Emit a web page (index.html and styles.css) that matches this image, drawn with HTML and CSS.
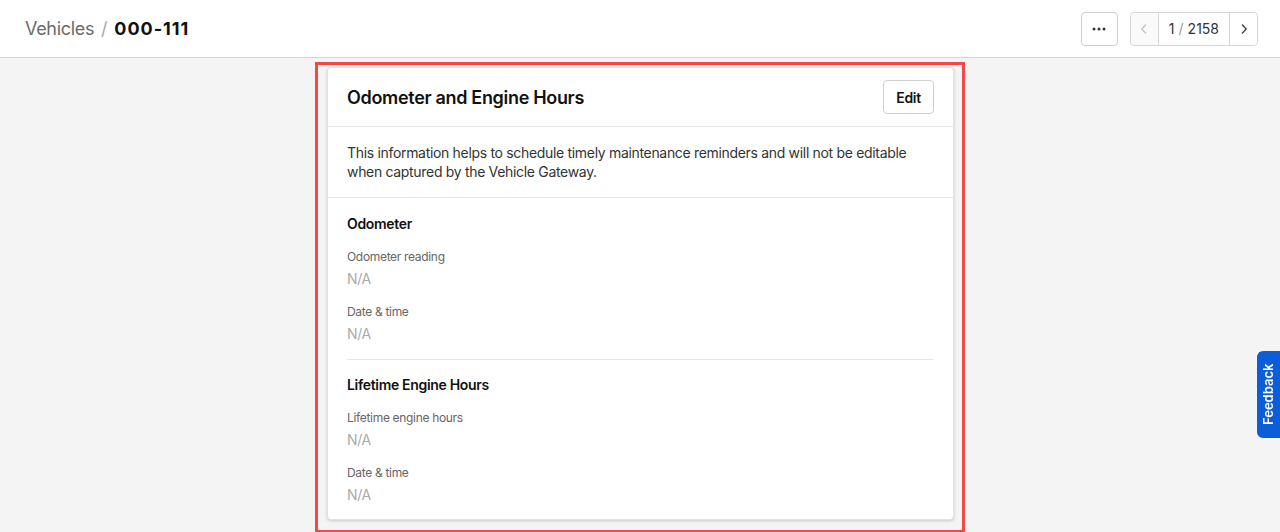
FILE: index.html
```html
<!DOCTYPE html>
<html lang="en">
<head>
    <meta charset="UTF-8">
    <meta name="viewport" content="width=device-width, initial-scale=1.0">
    <title>000-111 - Vehicles</title>
    <link rel="stylesheet" href="styles.css">
</head>
<body>
    <header class="topbar">
        <div class="crumbs">
            <span class="crumb">Vehicles</span>
            <span class="sep">/</span>
            <span class="current">000-111</span>
        </div>
        <div class="actions">
            <button class="more-btn" aria-label="More">
                <svg width="14" height="4" viewBox="0 0 14 4"><circle cx="2" cy="2" r="1.5"/><circle cx="7" cy="2" r="1.5"/><circle cx="12" cy="2" r="1.5"/></svg>
            </button>
            <div class="pager">
                <button class="pg-btn disabled" aria-label="Previous">
                    <svg width="8" height="12" viewBox="0 0 8 12"><path d="M6 1.5 1.8 6 6 10.5" fill="none" stroke="currentColor" stroke-width="1.4"/></svg>
                </button>
                <span class="pg-count">1 <span class="slash">/</span> 2158</span>
                <button class="pg-btn" aria-label="Next">
                    <svg width="8" height="12" viewBox="0 0 8 12"><path d="M2 1.5 6.2 6 2 10.5" fill="none" stroke="currentColor" stroke-width="1.4"/></svg>
                </button>
            </div>
        </div>
    </header>

    <main class="content">
        <div class="highlight">
            <section class="card">
                <div class="card-head">
                    <h2>Odometer and Engine Hours</h2>
                    <button class="edit-btn">Edit</button>
                </div>
                <p class="card-desc">This information helps to schedule timely maintenance reminders and will not be editable when captured by the Vehicle Gateway.</p>
                <div class="group">
                    <h3>Odometer</h3>
                    <div class="field">
                        <div class="label">Odometer reading</div>
                        <div class="value">N/A</div>
                    </div>
                    <div class="field">
                        <div class="label">Date &amp; time</div>
                        <div class="value">N/A</div>
                    </div>
                </div>
                <div class="group">
                    <h3>Lifetime Engine Hours</h3>
                    <div class="field">
                        <div class="label">Lifetime engine hours</div>
                        <div class="value">N/A</div>
                    </div>
                    <div class="field">
                        <div class="label">Date &amp; time</div>
                        <div class="value">N/A</div>
                    </div>
                </div>
            </section>
        </div>
    </main>

    <a class="feedback" href="#">Feedback</a>
</body>
</html>
```

FILE: styles.css
```css
/* page */
body {margin: 0; background: #f4f4f4; font-family: Inter, "Noto Sans", sans-serif; color: #1a1a1a; letter-spacing: -0.02em; overflow: hidden;}
button {font-family: inherit; letter-spacing: inherit; cursor: pointer;}

/* top bar */
.topbar {height: 57px; background: #fff; border-bottom: 1px solid #d4d4d4; display: flex; align-items: center; justify-content: space-between; padding: 0 22px 0 25px;}
.crumbs {display: flex; align-items: center; gap: 7px; font-size: 18px;}
.crumb {color: #6b6b6b;}
.sep {color: #a8a8a8;}
.current {font-weight: 700; color: #111; letter-spacing: 1px;}
.actions {display: flex; align-items: center; gap: 12px;}
.more-btn {width: 37px; height: 34px; border: 1px solid #cfcfcf; border-radius: 4px; background: #fff; display: flex; align-items: center; justify-content: center; padding: 0; fill: #333;}
.pager {display: flex; height: 34px; border: 1px solid #d6d6d6; border-radius: 4px; box-sizing: border-box; background: #fff;}
.pg-btn {width: 27px; border: 0; background: #fff; color: #444; display: flex; align-items: center; justify-content: center; padding: 0; border-radius: 4px;}
.pg-btn.disabled {color: #c4c4c4; background: #fafafa;}
.pg-count {display: flex; align-items: center; gap: 4px; padding: 0 10px; font-size: 14px; color: #333; letter-spacing: 0; border-left: 1px solid #d6d6d6; border-right: 1px solid #d6d6d6;}
.pg-count .slash {color: #999;}

/* content */
.content {display: flex; justify-content: center; padding-top: 4px;}
.highlight {width: 650px; border: 3px solid #f2484a; padding: 2px 8px 10px 9px; box-sizing: border-box;}
.card {background: #fff; border: 1px solid #e2e2e2; border-radius: 4px; box-shadow: 0 1px 3px rgba(0, 0, 0, 0.18);}
.card-head {height: 58px; display: flex; align-items: center; justify-content: space-between; padding: 0 19px; border-bottom: 1px solid #e6e6e6;}
.card-head h2 {margin: 0; font-size: 18px; font-weight: 600; color: #111;}
.edit-btn {width: 51px; height: 34px; border: 1px solid #cfcfcf; border-radius: 4px; background: #fff; font-size: 14px; font-weight: 600; color: #111; padding: 0;}
.card-desc {margin: 0; padding: 16px 19px; font-size: 14px; line-height: 19px; color: #333; border-bottom: 1px solid #e6e6e6;}
.group {margin: 0 19px; padding: 16px 0 15px;}
.group + .group {border-top: 1px solid #e6e6e6; padding: 15px 0 14px;}
.group h3 {margin: 0 0 15px; font-size: 14px; line-height: 20px; font-weight: 600; color: #111;}
.field + .field {margin-top: 15px;}
.label {font-size: 12px; line-height: 16px; color: #666;}
.value {margin-top: 4px; font-size: 14px; line-height: 20px; color: #aaa;}

/* feedback tab */
.feedback {position: fixed; right: 0; top: 351px; width: 23px; height: 87px; background: #0b5ed7; border-radius: 0 6px 6px 0; color: #fff; text-decoration: none; font-size: 13px; font-weight: 600; letter-spacing: 0; display: flex; align-items: center; justify-content: center; writing-mode: vertical-rl; transform: rotate(180deg);}
```
